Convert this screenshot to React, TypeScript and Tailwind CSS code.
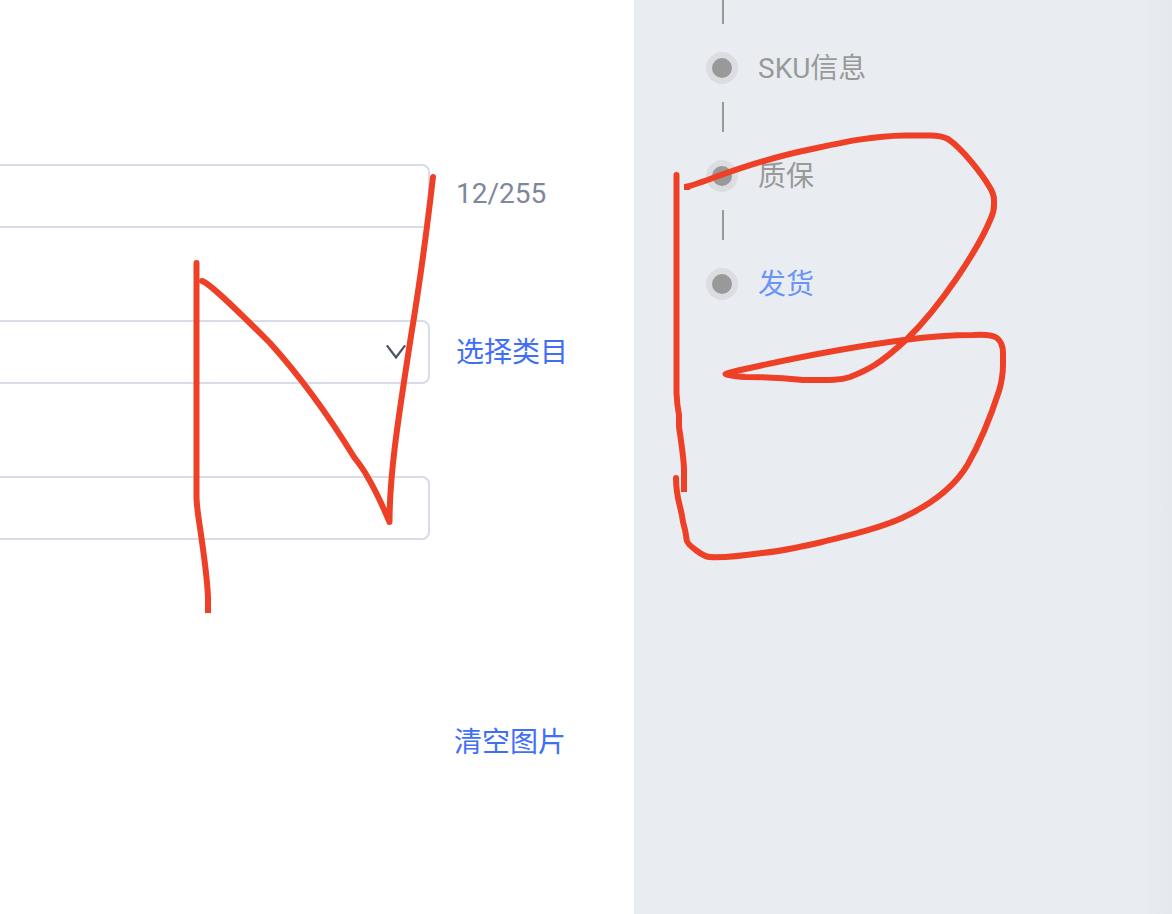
import React from "react";

type Step = { label: string; active?: boolean };

const steps: Step[] = [
  { label: "SKU信息" },
  { label: "质保" },
  { label: "发货", active: true },
];

const strokes: string[] = [
  "M196.5 263V498Q197 508 199 521Q207 574 208 597V610",
  "M202 281C210 283 246 319 270 343C308 385 338 431 354 457Q364 470 367 476C376 491 384 509 389.5 522C389.500 470 400 408 411 336C420 282 427 229 433 177",
  "M676.500 175V393Q677 405 679 415V427Q684 460 684 470V489",
  "M687 186.500C700 185 742 163 812 149C840 143 870 136 905 135.500H928Q940 135 948 139C964 150 983 176 989 186Q994 194 994 200V205Q994 212 991 218C978 250 940 307 907 339C880 364 868 370 850 377C838 381 825 380 803 380Q775 377 745 377Q727 376 725.500 374Q726 373 745 369C790 359 850 347 904 340Q942 335 973 335Q992 334 997 338Q1003 343 1003 353V364Q1003 378 999 391Q985 434 968 464C954 488 930 505 902 518C880 528 850 535 820 542.500Q783 551 762 553Q727 558 710 557Q705 557 697 551Q686 543 686.500 539Q686 533 683 522C681 505 676 500 676 478",
];

const caps: [number, number][] = [
  [208, 610],
  [684, 489],
  [687, 187],
];

function TextRow({ id, label, children }: { id: string; label: string; children?: React.ReactNode }) {
  return (
    <div className="flex h-16 items-center">
      <div className="h-full min-w-0 flex-1">
        <input
          id={id}
          aria-label={label}
          className="block h-full w-full rounded-r-lg border-2 border-l-0 border-[#d8dbe8] bg-white px-6 text-[28px] outline-none"
        />
      </div>
      <div className="w-[204px] pl-[26px]">{children}</div>
    </div>
  );
}

export default function App() {
  return (
    <div className="relative flex min-h-screen overflow-hidden bg-white font-['Roboto','Noto_Sans_CJK_SC',sans-serif] text-[28px] leading-8">
      <main className="min-w-0 flex-1">
        <form className="flex flex-col gap-[92px] pt-[164px]" onSubmit={(e) => e.preventDefault()}>
          <TextRow id="title" label="标题">
            <output htmlFor="title" className="block pb-1 text-[#7e879c]">
              12/255
            </output>
          </TextRow>

          <div className="flex h-16 items-center">
            <div className="grid h-full min-w-0 flex-1 items-center">
              <select
                aria-label="类目"
                className="col-start-1 row-start-1 h-full w-full appearance-none rounded-r-lg border-2 border-l-0 border-[#d8dbe8] bg-white px-6 outline-none"
              >
                <option value=""></option>
              </select>
              <svg
                aria-hidden="true"
                viewBox="0 0 20 14"
                className="pointer-events-none col-start-1 row-start-1 mr-6 h-[14px] w-5 justify-self-end"
                fill="none"
                stroke="#4b5263"
                strokeWidth="2.2"
              >
                <path d="M.8 .3L10 12.500L19.200 .3" />
              </svg>
            </div>
            <div className="w-[204px] pl-[26px]">
              <button type="button" className="block cursor-pointer pt-0.5 text-[#3f6ff6]">
                选择类目
              </button>
            </div>
          </div>

          <TextRow id="brand" label="品牌" />

          <div className="flex justify-end">
            <div className="w-[204px] pt-[93px] pl-6">
              <button type="button" className="block cursor-pointer pt-0.5 text-[#3f6ff6]">
                清空图片
              </button>
            </div>
          </div>
        </form>
      </main>

      <aside className="flex w-[538px] shrink-0 bg-[#e9edf2]">
        <ol className="flex-1 pl-[72px]">
          {steps.map((step, i) => (
            <li key={step.label}>
              <div className={i === 0 ? "ml-4 h-6 w-0.5 bg-[#999]" : "mt-[18px] ml-4 h-[30px] w-0.5 bg-[#999]"} />
              <div className="mt-7 flex h-8 items-center gap-5">
                <span className="flex size-8 items-center justify-center rounded-full bg-[#dcdde0]">
                  <span className="size-5 rounded-full bg-[#999]" />
                </span>
                <a href="#" className={step.active ? "pt-0.5 text-[#6b94f8]" : "pt-0.5 text-[#999]"}>
                  {step.label}
                </a>
              </div>
            </li>
          ))}
        </ol>
        <div className="w-6 bg-linear-to-r from-[#e8ecf1] to-[#e4e8ed]" />
      </aside>

      <svg
        aria-hidden="true"
        className="pointer-events-none absolute top-0 left-0 h-[914px] w-[1172px]"
        viewBox="0 0 1172 914"
        fill="none"
        stroke="#ee4026"
        strokeWidth="6"
        strokeLinecap="round"
        strokeLinejoin="round"
      >
        {strokes.map((d) => (
          <path key={d} d={d} />
        ))}
        {caps.map(([x, y]) => (
          <rect key={x} x={x - 3} y={y - 3} width="6" height="6" fill="#ee4026" stroke="none" />
        ))}
      </svg>
    </div>
  );
}
